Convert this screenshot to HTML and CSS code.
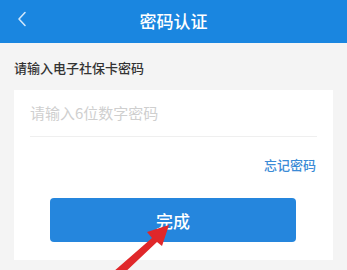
FILE: index.html
```html
<!DOCTYPE html>
<html>
<head>
<meta charset="utf-8">
<link rel="stylesheet" href="styles.css">
</head>
<body>
<div class="header">
  <svg class="back" width="10" height="16" viewBox="0 0 10 16"><path d="M8 1.5 L2 8 L8 14.5" fill="none" stroke="#cfe6fb" stroke-width="1.6" stroke-linecap="round" stroke-linejoin="round"/></svg>
  <div class="title">密码认证</div>
</div>
<div class="label">请输入电子社保卡密码</div>
<div class="card">
  <div class="input">请输入6位数字密码</div>
  <div class="forget">忘记密码</div>
  <div class="btn">完成</div>
</div>
<svg class="arrow" width="347" height="270" viewBox="0 0 347 270">
  <path d="M113 272 L152 238 L147 232 L169 225 L162 246 L157 242 L120 277 Z" fill="#e0272a"/>
</svg>
</body>
</html>
```
FILE: styles.css
```css
html, body {
  margin: 0;
  padding: 0;
  background: #f4f4f4;
  font-family: "Noto Sans CJK SC", "Noto Sans", sans-serif;
  width: 347px;
  height: 270px;
  overflow: hidden;
  position: relative;
}
.header {
  height: 43px;
  background: #1a86e0;
  display: flex;
  align-items: center;
  justify-content: center;
  position: relative;
}
.back {
  position: absolute;
  left: 17px;
  top: 11px;
}
.title {
  color: #fff;
  font-size: 17px;
  font-weight: 500;
  line-height: 20px;
  margin-top: -2px;
}
.label {
  margin-top: 15px;
  padding: 0 14px;
  font-size: 13px;
  font-weight: 500;
  line-height: 20px;
  color: #333;
}
.card {
  margin: 12px 14px 0;
  background: #fff;
  padding: 0 16px 18px;
}
.input {
  height: 46px;
  line-height: 46px;
  font-size: 15px;
  color: #cfcfcf;
  border-bottom: 1px solid #efefef;
}
.forget {
  margin-top: 18px;
  text-align: right;
  font-size: 13px;
  font-weight: 500;
  line-height: 20px;
  color: #3b8bd6;
  padding-right: 1px;
}
.btn {
  margin: 23px 21px 0 20px;
  height: 44px;
  border-radius: 4px;
  background: #2586dd;
  color: #fff;
  font-size: 17px;
  font-weight: 500;
  display: flex;
  align-items: center;
  justify-content: center;
}
.arrow {
  position: absolute;
  left: 0;
  top: 0;
}
```
